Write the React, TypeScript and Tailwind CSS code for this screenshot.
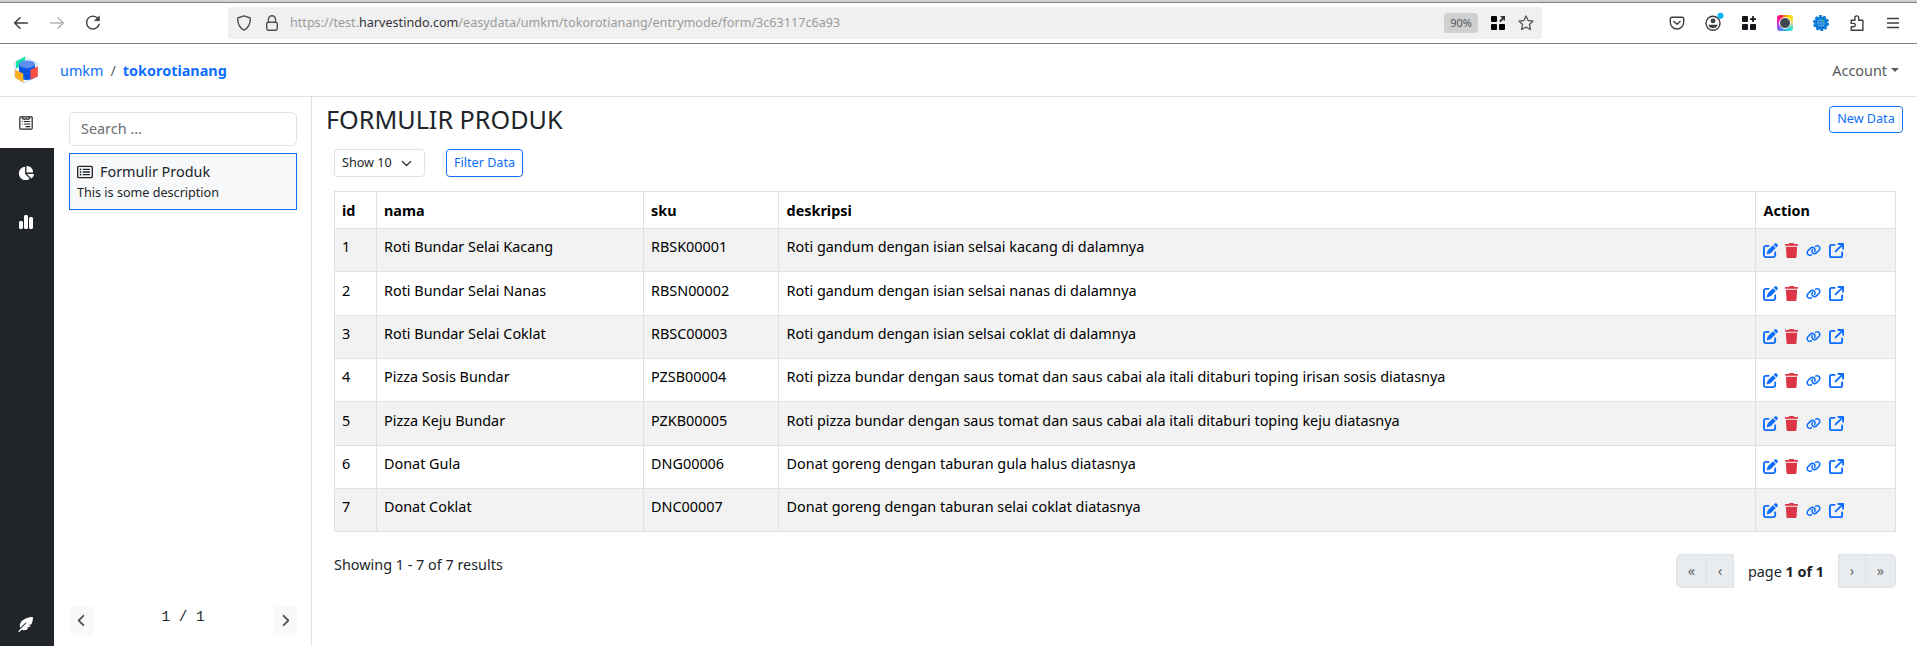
import React from "react";
import {
  FaPenToSquare,
  FaTrash,
  FaLink,
  FaArrowUpRightFromSquare,
  FaChartPie,
  FaChartSimple,
  FaFeatherPointed,
  FaRegRectangleList,
  FaAngleLeft,
  FaAngleRight,
} from "react-icons/fa6";

const rows = [
  ["Roti Bundar Selai Kacang", "RBSK00001", "Roti gandum dengan isian selsai kacang di dalamnya"],
  ["Roti Bundar Selai Nanas", "RBSN00002", "Roti gandum dengan isian selsai nanas di dalamnya"],
  ["Roti Bundar Selai Coklat", "RBSC00003", "Roti gandum dengan isian selsai coklat di dalamnya"],
  ["Pizza Sosis Bundar", "PZSB00004", "Roti pizza bundar dengan saus tomat dan saus cabai ala itali ditaburi toping irisan sosis diatasnya"],
  ["Pizza Keju Bundar", "PZKB00005", "Roti pizza bundar dengan saus tomat dan saus cabai ala itali ditaburi toping keju diatasnya"],
  ["Donat Gula", "DNG00006", "Donat goreng dengan taburan gula halus diatasnya"],
  ["Donat Coklat", "DNC00007", "Donat goreng dengan taburan selai coklat diatasnya"],
];

const rowHeights = ["h-[43px]", "h-[44px]", "h-[43px]", "h-[43px]", "h-[44px]", "h-[43px]", "h-[43px]"];
const textTops = ["pt-[7px]", "pt-[8px]", "pt-[7px]", "pt-[7px]", "pt-[8px]", "pt-[7px]", "pt-[7px]"];
const iconTops = ["pt-[14px]", "pt-[14px]", "pt-[13px]", "pt-[14px]", "pt-[14px]", "pt-[13px]", "pt-[14px]"];

function Toolbar() {
  return (
    <div className="flex h-[44px] shrink-0 flex-col border-b border-[#808080] bg-white">
      <div className="h-[3px] shrink-0 border-b border-[#808080] bg-[#d0d0d0]" />
      <div className="flex flex-1 items-center">
        <div className="flex w-[228px] items-center gap-[20px] pl-[13px]">
          <svg className="size-4 text-[#3c3c42]" viewBox="0 0 16 16" fill="none" stroke="currentColor" strokeWidth="1.5" strokeLinecap="round" strokeLinejoin="round">
            <path d="M14.4 8H1.6M7 2.7 1.6 8 7 13.3" />
          </svg>
          <svg className="size-4 text-[#b4b4b6]" viewBox="0 0 16 16" fill="none" stroke="currentColor" strokeWidth="1.5" strokeLinecap="round" strokeLinejoin="round">
            <path d="M1.6 8h12.8M9 2.7 14.4 8 9 13.3" />
          </svg>
          <svg className="size-4 text-[#3c3c42]" viewBox="0 0 16 16" fill="none" stroke="currentColor" strokeWidth="1.4" strokeLinecap="round" strokeLinejoin="round">
            <path d="M14.1 9.2A6.4 6.4 0 1 1 12.8 3.4L14 4.6" />
            <path d="M14.3 1.2v4.6H9.7z" fill="currentColor" strokeWidth=".6" />
          </svg>
        </div>
        <div className="flex h-8 w-[1314px] items-center rounded-[4px] bg-[#f0f0f0] pl-2 pr-2">
          <svg className="size-4 text-[#4f4f53]" viewBox="0 0 16 16" fill="none" stroke="currentColor" strokeWidth="1.4" strokeLinejoin="round">
            <path d="M8 .8 14.3 3c.2 5.5-1.6 9.6-6.3 12.2C3.300 12.600 1.500 8.500 1.700 3z" />
          </svg>
          <svg className="ml-3 size-4 text-[#4f4f53]" viewBox="0 0 16 16" fill="none" stroke="currentColor" strokeWidth="1.4">
            <rect x="2.700" y="7.200" width="10.600" height="8" rx="1.600" />
            <path d="M4.500 7V4.200a3.500 3.500 0 0 1 7 0V7" />
          </svg>
          <span className="ml-[10px] whitespace-pre text-[12.600px] leading-5 text-[#9b9b9b]">
            https://test.<span className="text-[#333338]">harvestindo.com</span>/easydata/umkm/tokorotianang/entrymode/form/3c63117c6a93
          </span>
          <span className="ml-auto flex h-5 w-[34px] items-center justify-center rounded-[3px] bg-[#d0d0d0] text-[11px] text-[#55555a]">90%</span>
          <svg className="ml-3 size-4" viewBox="0 0 16 16" fill="#000">
            <rect x="1" y="1" width="6" height="6" rx="1" />
            <rect x="1" y="9" width="6" height="6" rx="1" />
            <rect x="9" y="9" width="6" height="6" rx="1" />
            <path d="M10 1h5v5l-1.600-1.600L10.600 7.200 9.200 5.800 12 3z" fill="#333" />
          </svg>
          <svg className="ml-3 size-4 text-[#55555a]" viewBox="0 0 16 16" fill="none" stroke="currentColor" strokeWidth="1.3" strokeLinejoin="round">
            <path d="m8 .9 2.100 4.600 5 .6-3.700 3.400 1 5L8 12.100l-4.400 2.400 1-5L.9 6.100l5-.6z" />
          </svg>
        </div>
        <div className="ml-auto flex items-center gap-5 pr-4">
          <svg className="size-4 text-[#3c3c42]" viewBox="0 0 16 16" fill="none" stroke="currentColor" strokeWidth="1.4" strokeLinecap="round" strokeLinejoin="round">
            <path d="M2.800 2.200h10.400a1.500 1.500 0 0 1 1.500 1.500v3.600a6.700 6.700 0 0 1-13.400 0V3.700a1.500 1.500 0 0 1 1.500-1.500z" />
            <path d="M4.900 6.500 8 9.300l3.100-2.800" />
          </svg>
          <svg className="size-4 overflow-visible text-[#3c3c42]" viewBox="0.800 1.300 16 16" fill="none" stroke="currentColor" strokeWidth="1.400">
            <circle cx="8.800" cy="9.500" r="7" />
            <circle cx="8.800" cy="7.200" r="2.400" fill="currentColor" stroke="none" />
            <path d="M4.200 11h9.200c-.4 2-2 3.300-4.600 3.300S4.600 13 4.200 11z" fill="currentColor" stroke="none" />
            <circle cx="16.300" cy="2" r="3" fill="#00b3f4" stroke="none" />
          </svg>
          <svg className="size-4" viewBox="0 0 16 16" fill="#15141a">
            <rect x="1" y="1" width="6" height="6" rx="1" />
            <rect x="1" y="9" width="6" height="6" rx="1" />
            <rect x="9" y="9" width="6" height="6" rx="1" />
            <path d="M11.200 1h1.700v2.200H15v1.700h-2.100V7h-1.700V4.900H9V3.200h2.200z" />
          </svg>
          <span className="flex size-4 items-center justify-center rounded-[3px] bg-[conic-gradient(#ff8a00,#ffe000_10%,#f7d774_22%,#2fe0d0_38%,#2bb5ff_50%,#8b5cf6_65%,#ff18c8_80%,#ff2040_92%,#ff8a00)]">
            <span className="size-3 rounded-full border-[1.500px] border-white bg-[#3f4650]" />
          </span>
          <svg className="size-4" viewBox="0 0 16 16">
            <circle cx="8" cy="8" r="6.600" fill="#0a78d6" />
            <circle cx="8" cy="8" r="6.900" fill="none" stroke="#0a78d6" strokeWidth="2.200" strokeDasharray="2.800 1.535" />
            <path d="M4 8h8M8 4v8M5 5.500h6M5 10.500h6M5.800 4.500c-1 2-1 5 0 7M10.200 4.500c1 2 1 5 0 7" stroke="#6fb6ee" strokeWidth=".7" fill="none" />
            <circle cx="10" cy="5.500" r="1" fill="#20c050" />
          </svg>
          <svg className="size-4 text-[#3c3c42]" viewBox="0 0 16 16" fill="none" stroke="currentColor" strokeWidth="1.400" strokeLinejoin="round">
            <path d="M2.200 5.200h3.700V2.800a1.900 1.900 0 0 1 3.800 0v2.400h4.200v10H2.200v-3.400h2.400a1.700 1.700 0 0 0 0-3.400H2.200z" />
          </svg>
          <svg className="size-4 text-[#3c3c42]" viewBox="0 0 16 16" stroke="currentColor" strokeWidth="1.300" strokeLinecap="round">
            <path d="M2.500 3.500h11M2.500 8h11M2.500 12.500h11" />
          </svg>
        </div>
      </div>
    </div>
  );
}

function Logo() {
  return (
    <svg className="h-7 w-6" viewBox="0 0 24 28">
      <path d="M11 .8 23.200 7.500v13.500L9.500 27 .8 21V6z" fill="#f3f8ff" stroke="#a9c9f5" strokeWidth=".7" />
      <path d="M2 5.500 11 .8v7L2 12.500z" fill="#0fe3a5" />
      <path d="M5 8v13c2 4 13 4 16 0V8z" fill="#0b57e3" />
      <ellipse cx="13" cy="8.300" rx="8" ry="3.900" fill="#5b8def" />
      <path d="M5.500 13.500c3 3 12 3 15 0M6 18c3 3 9 3 12 1" fill="none" stroke="#0844b8" strokeWidth=".8" />
      <path d="M1 13.500 9.300 17.800V26.500L1 21.500z" fill="#fbb024" />
      <path d="M16.500 13.700 23.800 10.500V20.500L16.500 23.500z" fill="#fb4f45" />
    </svg>
  );
}

function Rail() {
  return (
    <nav className="flex w-[54px] shrink-0 flex-col bg-[#212529] text-white">
      <div className="flex h-[51px] items-center justify-center bg-white pr-[2px]">
        <svg className="size-[14px] text-[#212529]" viewBox="0 0 14 14" fill="none" stroke="currentColor" strokeWidth="1.200">
          <rect x=".8" y=".9" width="12.400" height="12.200" rx=".8" />
          <path d="M3.500 1v1.500l1.800 1L7 2.500l1.700 1 1.800-1V1M2.700 5.500h1M5 5.500h6.300M2.700 8h1M5 8h6.300M6.500 10.700h4.800" />
        </svg>
      </div>
      <div className="flex h-[50px] items-center justify-center pb-px pr-[2px]"><FaChartPie size={16} /></div>
      <div className="flex h-[50px] items-center justify-center pb-[2px] pr-[2px]"><FaChartSimple size={16} /></div>
      <div className="mt-auto flex h-[44px] items-center justify-center pr-[4px]"><FaFeatherPointed size={15} /></div>
    </nav>
  );
}

function FormList() {
  return (
    <aside className="flex w-[258px] shrink-0 flex-col border-r border-[#dee2e6] pl-[15px] pr-[14px] pt-[15px]">
      <input
        placeholder="Search ..."
        className="h-[34px] w-[228px] shrink-0 rounded-[5.400px] border border-[#dee2e6] px-[11px] pb-px text-[14.400px] text-[#212529] outline-none placeholder:text-[#6a6d70]"
      />
      <div className="mt-[7px] h-[57px] w-[228px] shrink-0 border border-[#0d6efd] bg-[#f8f9fa] px-[7px] pt-[7px]">
        <div className="flex h-[22px] items-center gap-[7px] text-[14.400px]">
          <FaRegRectangleList size={16} />
          <span>Formulir Produk</span>
        </div>
        <div className="text-[12.600px] leading-[19px]">This is some description</div>
      </div>
      <div className="mt-auto mb-[11px] flex items-center justify-between">
        <button className="flex h-[29px] w-[24px] items-center justify-center rounded-[3.600px] bg-[#f8f9fa] text-[#555]"><FaAngleLeft size={15} /></button>
        <span className="mb-[7px] font-['Liberation_Mono',monospace] text-[14.400px] leading-5">1 / 1</span>
        <button className="flex h-[29px] w-[24px] items-center justify-center rounded-[3.600px] bg-[#f8f9fa] text-[#555]"><FaAngleRight size={15} /></button>
      </div>
    </aside>
  );
}

function Actions({ top }: { top: string }) {
  return (
    <div className={`flex items-center text-[#0d6efd] ${top}`}>
      <FaPenToSquare size={15} />
      <FaTrash className="ml-[6px] text-[#dc3545]" size={15} />
      <FaLink className="ml-[7px]" size={15} />
      <FaArrowUpRightFromSquare className="ml-[8px]" size={15} />
    </div>
  );
}

function DataTable() {
  return (
    <table className="mt-[14px] w-[1562px] table-fixed border-collapse text-left text-[14.400px] leading-[21.600px] text-black [&_td]:border [&_td]:border-[#dee2e6] [&_td]:px-[7px] [&_td]:py-0 [&_td]:align-top [&_th]:border [&_th]:border-[#dee2e6] [&_th]:px-[7px] [&_th]:pb-0 [&_th]:pt-[2px]">
      <colgroup>
        <col className="w-[42px]" />
        <col className="w-[267px]" />
        <col className="w-[135px]" />
        <col className="w-[977px]" />
        <col className="w-[140px]" />
      </colgroup>
      <thead>
        <tr className="h-[37px]">
          {["id", "nama", "sku", "deskripsi", "Action"].map((h, i) => (
            <th key={h} className="font-bold"><div className={i > 2 ? "pl-[0.600px]" : ""}>{h}</div></th>
          ))}
        </tr>
      </thead>
      <tbody>
        {rows.map((r, i) => (
          <tr key={r[1]} className={`${rowHeights[i]} ${i % 2 === 0 ? "bg-[#f2f2f2]" : "bg-white"}`}>
            <td><div className={textTops[i]}>{i + 1}</div></td>
            <td><div className={textTops[i]}>{r[0]}</div></td>
            <td><div className={textTops[i]}>{r[1]}</div></td>
            <td><div className={`pl-[0.600px] ${textTops[i]}`}>{r[2]}</div></td>
            <td><Actions top={iconTops[i]} /></td>
          </tr>
        ))}
      </tbody>
    </table>
  );
}

function Pager() {
  const cell = "flex h-[34px] items-center justify-center border border-[#dee2e6] bg-[#e9ecef] text-[#5f666c]";
  return (
    <div className="mt-[22px] flex items-start justify-between text-[14.400px]">
      <span className="leading-[22px]">Showing 1 - 7 of 7 results</span>
      <div className="flex items-center">
        <span className={`${cell} w-[31px] rounded-l-[5.400px]`}>«</span>
        <span className={`${cell} -ml-px w-[28px]`}>‹</span>
        <span className="w-[104px] pt-[2px] text-center">page <b>1 of 1</b></span>
        <span className={`${cell} w-[28px]`}>›</span>
        <span className={`${cell} -ml-px w-[31px] rounded-r-[5.400px]`}>»</span>
      </div>
    </div>
  );
}

export default function App() {
  return (
    <div className="flex h-[646px] w-[1917px] flex-col overflow-hidden bg-white font-['Noto_Sans',sans-serif] text-[#212529]">
      <Toolbar />
      <header className="flex h-[53px] shrink-0 items-center border-b border-[#dee2e6] pl-[14px] pr-[18px] text-[14.400px]">
        <Logo />
        <div className="ml-[22px] flex whitespace-pre pt-[2px] text-[#0d6efd]">
          <span>umkm</span>
          <span className="mx-[7px] text-[#5c6166]">/</span>
          <b>tokorotianang</b>
        </div>
        <div className="ml-auto flex items-center gap-1 pt-[2px] text-[#595a5b]">
          Account
          <span className="mb-[2px] border-x-4 border-t-4 border-x-transparent border-t-[#595a5b]" />
        </div>
      </header>
      <div className="flex min-h-0 flex-1">
        <Rail />
        <FormList />
        <main className="flex flex-1 flex-col pl-[14px] pr-[14px] pt-[7px]">
          <div className="flex h-[30px] items-center justify-between">
            <h3 className="text-[25.200px] leading-[30px]">FORMULIR PRODUK</h3>
            <button className="h-[27px] w-[74px] rounded-[3.600px] border border-[#0d6efd] text-[12.600px] text-[#0d6efd]">New Data</button>
          </div>
          <div className="flex flex-col pl-[8px] pr-[7px] pt-[15px]">
            <div className="flex">
              <div className="flex h-[28px] w-[91px] items-center rounded-[3.600px] border border-[#dee2e6] pl-[7px] text-[12.600px]">
                Show 10
                <svg className="ml-[9px] size-[11px]" viewBox="0 0 16 16" fill="none" stroke="#343a40" strokeWidth="2" strokeLinecap="round" strokeLinejoin="round">
                  <path d="m2 5 6 6 6-6" />
                </svg>
              </div>
              <button className="ml-[21px] h-[28px] w-[77px] rounded-[3.600px] border border-[#0d6efd] pt-px text-[12.600px] text-[#0d6efd]">Filter Data</button>
            </div>
            <DataTable />
            <Pager />
          </div>
        </main>
      </div>
    </div>
  );
}
